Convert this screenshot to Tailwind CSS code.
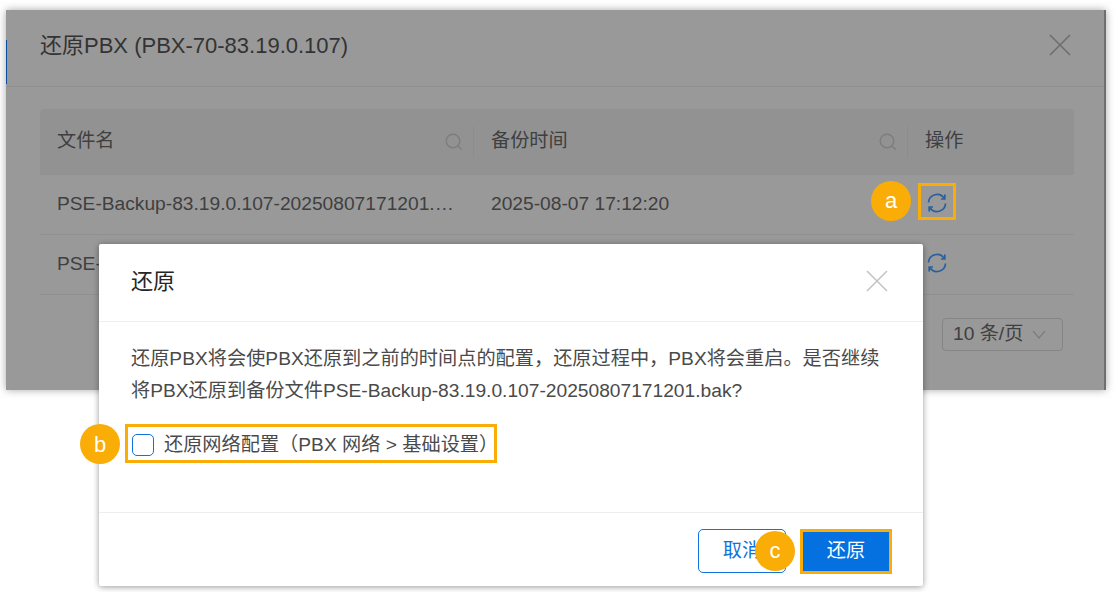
<!DOCTYPE html>
<html lang="zh-CN">
<head>
    <meta charset="UTF-8">
    <title>还原PBX</title>
    <script src="https://cdn.jsdelivr.net/npm/@tailwindcss/browser@4"></script>
</head>
<body class="bg-white font-['Liberation_Sans','Noto_Sans_CJK_SC',sans-serif]">
    <div class="relative w-[1116px] h-[592px] overflow-hidden bg-white pl-[6px] pt-[10px]">
        <!-- dimmed page behind the dialog -->
        <div class="relative w-[1100px] h-[380px] bg-[#999999] shadow-[0_0_8px_rgba(0,0,0,0.35)] border-r-2 border-[#6f6f6f]">
            <div class="absolute left-0 top-[30px] w-[1px] h-[44px] bg-[#0b4f9c]"></div>
            <div class="flex items-center justify-between h-[77px] pb-[6px] pl-[34px] pr-[33px] border-b border-[#909090]">
                <h1 class="text-[22px] text-[#333333] font-normal">还原PBX (PBX-70-83.19.0.107)</h1>
                <svg class="w-[22px] h-[22px]" viewBox="0 0 22 22" fill="none" stroke="#6e6e6e" stroke-width="1.6"><path d="M1 1 21 21M21 1 1 21"/></svg>
            </div>
            <div class="mx-[34px] mt-[22px] w-[1034px] text-[19.2px] text-[#3f3f3f]">
                <div class="flex h-[66px] items-center rounded-t-[4px] bg-[#929292]">
                    <div class="flex w-[434px] items-center justify-between pl-[17px] pr-[11px]">
                        <span class="-mt-[2px]">文件名</span>
                        <svg class="w-[18px] h-[18px]" viewBox="0 0 18 18" fill="none" stroke="#7d7d7d" stroke-width="1.4"><circle cx="8" cy="8" r="6.8"/><path d="M13 13l3.6 3.6"/></svg>
                    </div>
                    <div class="w-[1px] h-[32px] -ml-[1px] bg-[#8c8c8c]"></div>
                    <div class="flex w-[434px] items-center justify-between pl-[17px] pr-[11px]">
                        <span class="-mt-[2px]">备份时间</span>
                        <svg class="w-[18px] h-[18px]" viewBox="0 0 18 18" fill="none" stroke="#7d7d7d" stroke-width="1.4"><circle cx="8" cy="8" r="6.8"/><path d="M13 13l3.6 3.6"/></svg>
                    </div>
                    <div class="w-[1px] h-[32px] -ml-[1px] bg-[#8c8c8c]"></div>
                    <div class="pl-[17px] -mt-[2px]">操作</div>
                </div>
                <div class="flex h-[60px] items-center border-b border-[#909090]">
                    <div class="w-[434px] pl-[17px] pr-[20px] truncate">PSE-Backup-83.19.0.107-20250807171201.bak</div>
                    <div class="w-[434px] pl-[17px]">2025-08-07 17:12:20</div>
                    <div class="pl-[19px] -mt-[4px]">
                        <svg class="w-[20px] h-[20px]" viewBox="0 0 20 20" fill="none" stroke="#2a5f9e" stroke-width="1.7"><path d="M1.500 9.500A8.500 8.500 0 0 1 17.200 5.500"/><path d="M18.500 10.500A8.500 8.500 0 0 1 2.800 14.500"/><path d="M17.800 1.500v4.500h-3.800"/><path d="M2.200 18.500v-4.500h3.800"/></svg>
                    </div>
                </div>
                <div class="flex h-[60px] items-center border-b border-[#909090]">
                    <div class="w-[434px] pl-[17px] pr-[20px] truncate">PSE-Backup-83.19.0.107-20250807171201.bak</div>
                    <div class="w-[434px] pl-[17px]"></div>
                    <div class="pl-[19px] -mt-[4px]">
                        <svg class="w-[20px] h-[20px]" viewBox="0 0 20 20" fill="none" stroke="#2a5f9e" stroke-width="1.7"><path d="M1.500 9.500A8.500 8.500 0 0 1 17.200 5.500"/><path d="M18.500 10.500A8.500 8.500 0 0 1 2.800 14.500"/><path d="M17.800 1.500v4.500h-3.800"/><path d="M2.200 18.500v-4.500h3.800"/></svg>
                    </div>
                </div>
                <div class="flex justify-end mt-[23px] pr-[11px]">
                    <div class="flex w-[121px] h-[33px] items-center justify-between pl-[10px] pr-[16px] rounded-[4px] border border-[#858585] text-[#404040]">
                        <span>10 条/页</span>
                        <svg class="w-[14px] h-[10px]" viewBox="0 0 14 10" fill="none" stroke="#7d7d7d" stroke-width="1.2"><path d="M1 1l6 7 6-7"/></svg>
                    </div>
                </div>
            </div>
        </div>

        <!-- confirm dialog -->
        <div class="absolute left-[99px] top-[244px] flex w-[824px] h-[342px] flex-col rounded-[2px] bg-white shadow-[0_1px_6px_rgba(0,0,0,0.4)]">
            <div class="flex h-[78px] items-center justify-between pb-[4px] pl-[32px] pr-[35px] border-b border-[#eeeeee]">
                <h2 class="mt-[2px] text-[22px] text-[#262626] font-normal">还原</h2>
                <svg class="w-[22px] h-[22px]" viewBox="0 0 22 22" fill="none" stroke="#c4c4c4" stroke-width="1.6"><path d="M1 1 21 21M21 1 1 21"/></svg>
            </div>
            <div class="flex-1 px-[32px] pt-[21px] text-[19.2px] leading-[32px] text-[#4a4a4a]">
                <p class="w-[760px]">还原PBX将会使PBX还原到之前的时间点的配置，还原过程中，PBX将会重启。是否继续将PBX还原到备份文件PSE-Backup-83.19.0.107-20250807171201.bak?</p>
                <label class="flex items-center gap-[10px] mt-[26px] pl-[1px] leading-[24px]">
                    <span class="w-[22px] h-[22px] rounded-[5px] border border-[#0f72dd] bg-white"></span>
                    <span>还原网络配置（PBX 网络 &gt; 基础设置）</span>
                </label>
            </div>
            <div class="flex h-[74px] items-start justify-end gap-[16px] pt-[16px] pr-[33px] border-t border-[#eeeeee]">
                <button class="w-[88px] h-[44px] rounded-[5px] border border-[#0f72dd] bg-white text-[19.2px] text-[#0f72dd]">取消</button>
                <button class="w-[88px] h-[44px] bg-[#0570e0] text-[19.2px] text-white">还原</button>
            </div>
        </div>

        <!-- annotations -->
        <div class="absolute left-[918px] top-[183px] w-[38px] h-[37px] border-[3px] border-[#f9ad06]"></div>
        <div class="absolute left-[125px] top-[424px] w-[372px] h-[39px] border-[3px] border-[#f9ad06]"></div>
        <div class="absolute left-[800px] top-[529px] w-[92px] h-[45px] border-[3px] border-[#f9ad06]"></div>
        <div class="absolute left-[871px] top-[181px] flex w-[40px] h-[40px] pb-[2px] items-center justify-center rounded-full bg-[#f9ad06] text-[22px] text-white">a</div>
        <div class="absolute left-[80px] top-[424px] flex w-[40px] h-[40px] items-center justify-center rounded-full bg-[#f9ad06] text-[22px] text-white">b</div>
        <div class="absolute left-[755px] top-[531px] flex w-[40px] h-[40px] pb-[1px] items-center justify-center rounded-full bg-[#f9ad06] text-[22px] text-white">c</div>
    </div>
</body>
</html>
